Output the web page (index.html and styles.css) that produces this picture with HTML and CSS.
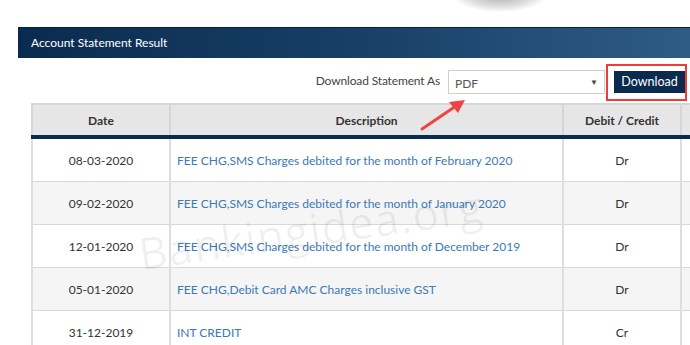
FILE: index.html
```html
<!DOCTYPE html>
<html>
<head>
<meta charset="utf-8">
<link rel="stylesheet" href="styles.css">
</head>
<body>
<div class="blob"></div>
<div class="page">
  <div class="panel-head">Account Statement Result</div>
  <div class="toolbar">
    <span class="tb-label">Download Statement As</span>
    <div class="select"><span>PDF</span><span class="caret">&#9660;</span></div>
    <button class="btn">Download</button>
  </div>
  <div class="table-wrap">
    <table class="stmt">
      <colgroup>
        <col class="w-date"><col class="w-desc"><col class="w-dc"><col class="w-more">
      </colgroup>
      <thead>
        <tr><th>Date</th><th>Description</th><th>Debit / Credit</th><th></th></tr>
      </thead>
      <tbody>
        <tr><td class="c-date">08-03-2020</td><td class="c-desc"><a>FEE CHG,SMS Charges debited for the month of February 2020</a></td><td class="c-dc">Dr</td><td></td></tr>
        <tr><td class="c-date">09-02-2020</td><td class="c-desc"><a>FEE CHG,SMS Charges debited for the month of January 2020</a></td><td class="c-dc">Dr</td><td></td></tr>
        <tr><td class="c-date">12-01-2020</td><td class="c-desc"><a>FEE CHG,SMS Charges debited for the month of December 2019</a></td><td class="c-dc">Dr</td><td></td></tr>
        <tr><td class="c-date">05-01-2020</td><td class="c-desc"><a>FEE CHG,Debit Card AMC Charges inclusive GST</a></td><td class="c-dc">Dr</td><td></td></tr>
        <tr><td class="c-date">31-12-2019</td><td class="c-desc"><a>INT CREDIT</a></td><td class="c-dc">Cr</td><td></td></tr>
      </tbody>
    </table>
    <div class="watermark">Bankingidea.org</div>
  </div>
</div>
<div class="annot-box"></div>
<svg class="annot-arrow" width="60" height="45" viewBox="0 0 60 45">
  <line x1="4" y1="37" x2="38" y2="14" stroke="#ee4444" stroke-width="3" stroke-linecap="round"/>
  <polygon points="47,8 31,10 40,21" fill="#ee4444"/>
</svg>
</body>
</html>
```
FILE: styles.css
```css
html, body {
  margin: 0;
  padding: 0;
  background: #fff;
  overflow: hidden;
  width: 690px;
  height: 345px;
}
body {
  font-family: "Lato", "Open Sans", sans-serif;
  font-size: 12px;
  color: #333;
  position: relative;
}
.blob {
  position: absolute;
  left: 452px;
  top: -24px;
  width: 96px;
  height: 36px;
  border-radius: 50%;
  background: radial-gradient(ellipse at center, rgba(110,110,110,0.6) 0%, rgba(150,150,150,0.3) 50%, rgba(255,255,255,0) 72%);
}
.page {
  padding-top: 27px;
  margin-left: 18px;
}
.panel-head {
  height: 30px;
  line-height: 30px;
  border-top: 1px solid #06203d;
  background: linear-gradient(to right, #0a2b50 0%, #183f66 50%, #2e5c84 100%);
  color: #fff;
  padding-left: 13px;
  font-size: 12px;
}
.toolbar {
  display: flex;
  justify-content: flex-end;
  align-items: center;
  height: 45px;
  padding-right: 5px;
  padding-top: 2px;
  box-sizing: border-box;
}
.tb-label {
  color: #444;
  margin-right: 8px;
  margin-top: -3px;
  letter-spacing: -0.15px;
}
.select {
  box-sizing: border-box;
  width: 157px;
  height: 24px;
  border: 1px solid #cfcfcf;
  display: flex;
  align-items: center;
  justify-content: space-between;
  padding: 0 6px 0 6px;
  color: #555;
  margin-right: 9px;
}
.select span:first-child { margin-top: 3px; }
.caret {
  font-size: 8px;
  color: #444;
}
.btn {
  width: 71px;
  height: 22px;
  border: none;
  background: #0b2b4e;
  color: #fff;
  font-family: inherit;
  font-size: 12.5px;
  padding: 0;
}
.table-wrap {
  position: relative;
  margin-left: 13px;
  width: 700px;
}
.stmt {
  border-collapse: collapse;
  table-layout: fixed;
  width: 700px;
}
.w-date { width: 138px; }
.w-desc { width: 393px; }
.w-dc { width: 118px; }
.w-more { width: 51px; }
.stmt th {
  background: #e6e6e6;
  height: 30px;
  font-weight: bold;
  color: #333;
  border: 2px solid #d6d6d6;
  border-bottom: 4px solid #0b2b4e;
  text-align: center;
  padding: 0;
}
.stmt td {
  height: 42px;
  border: 2px solid #dedede;
  border-top: 1px solid #d8d8d8;
  border-bottom: 1px solid #d8d8d8;
  padding: 0 6px;
  color: #333;
}
.stmt tbody tr:nth-child(even) td { background: #f5f5f5; }
.c-date, .c-dc { text-align: center; }
.c-desc { text-align: left; }
.stmt a { color: #3b79b8; }
.watermark {
  position: absolute;
  left: 112px;
  top: 120px;
  font-size: 44px;
  letter-spacing: 1px;
  color: rgba(0,0,0,0.06);
  transform: rotate(-8deg);
  transform-origin: left bottom;
  pointer-events: none;
  font-family: "Open Sans", sans-serif;
}
.annot-box {
  position: absolute;
  left: 606px;
  top: 64px;
  width: 77px;
  height: 33px;
  border: 2px solid #ee3b3b;
}
.annot-arrow {
  position: absolute;
  left: 418px;
  top: 92px;
}
```
